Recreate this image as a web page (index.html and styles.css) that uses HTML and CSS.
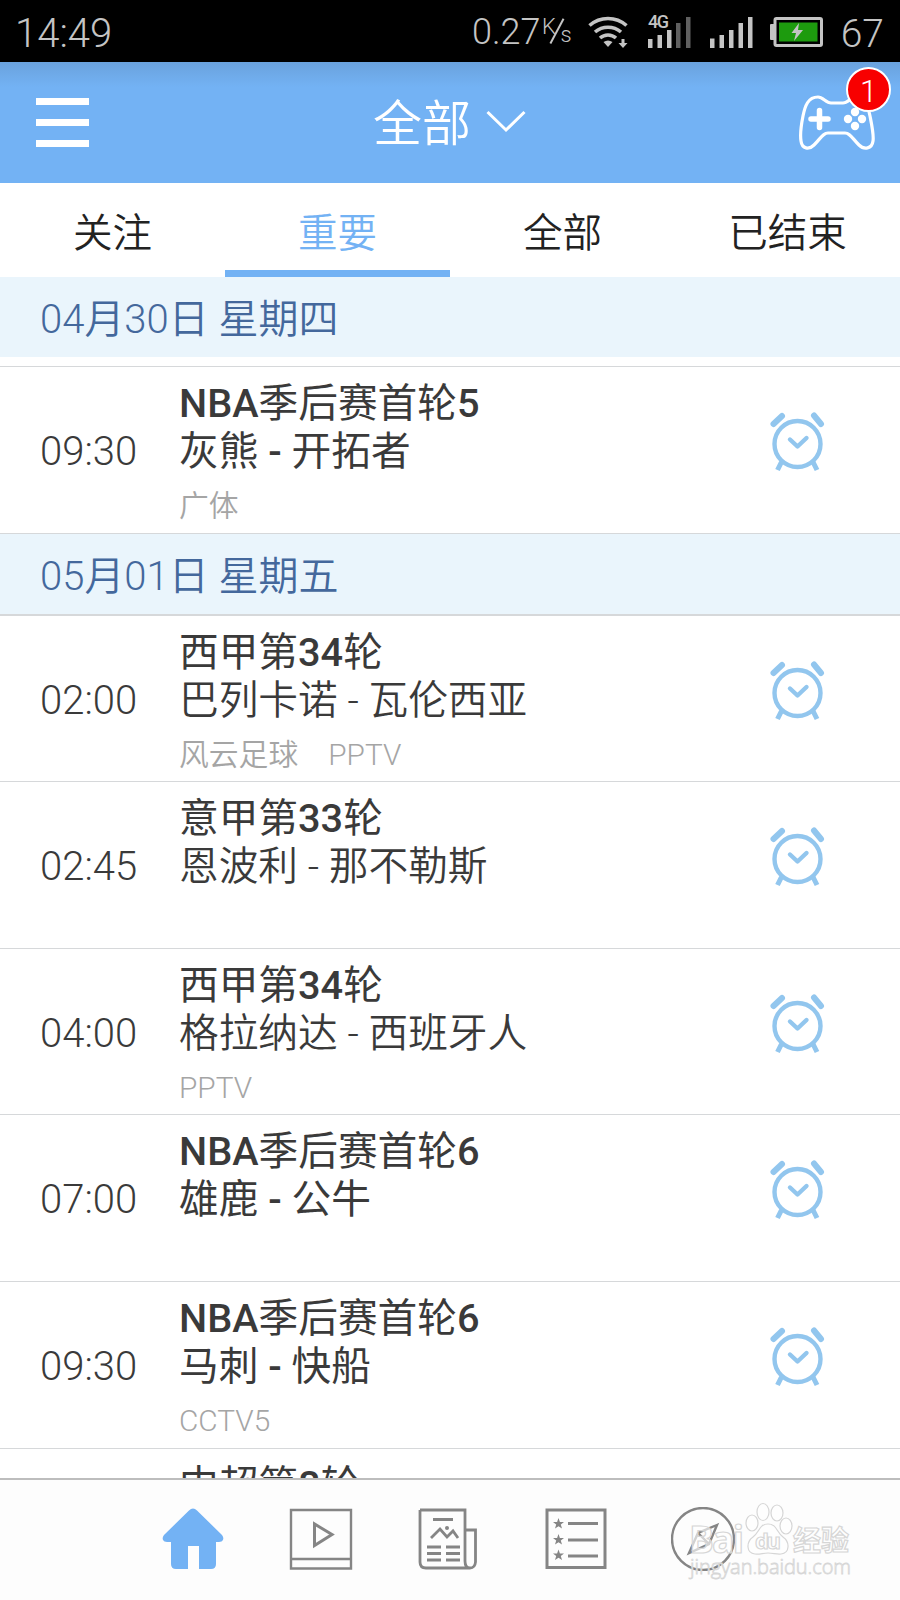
FILE: index.html
```html
<!DOCTYPE html>
<html lang="zh-CN">
<head>
    <meta charset="UTF-8" />
    <meta name="viewport" content="width=device-width, initial-scale=1" />
    <title>全部赛事</title>
    <link rel="stylesheet" href="styles.css">
</head>
<body>
    <svg class="sprite" width="0" height="0">
        <symbol id="alarm" viewBox="0 0 60 64">
            <g fill="none" stroke="#92c6ee" stroke-width="4.4" stroke-linecap="round" stroke-linejoin="round">
                <circle cx="29.500" cy="34" r="23" />
                <path d="M22 29.500l7.500 7 9-8.500" />
                <path d="M13.500 52l-4 8M45 52l4 8" stroke-linecap="butt" stroke-width="5" />
                <path d="M5.500 14l8.500-8M46 5.500l7 8.500" stroke-width="6" />
            </g>
        </symbol>
    </svg>

    <div class="status">
        <span class="clock">14:49</span>
        <span class="speed">0.27</span>
        <span class="unit"><span>K</span><i></i><b>s</b></span>
        <svg class="wifi" width="40" height="32" viewBox="0 0 40 32">
            <g fill="none" stroke="#c4c4c4" stroke-width="3.600">
                <path d="M1.500 9.500a28 28 0 0 1 37 0" />
                <path d="M7 16a20 20 0 0 1 26 0" />
                <path d="M12 22a12 12 0 0 1 16 0" />
            </g>
            <path d="M15.500 26q4.500-3 9 0l-4.500 5z" fill="#c4c4c4" />
            <path d="M33.500 23h3v4h3l-4.500 5-4.500-5h3z" fill="#c4c4c4" />
        </svg>
        <div class="cell">
            <span class="net">4G</span>
            <svg width="43" height="32" viewBox="0 0 43 32" fill="#c4c4c4">
                <path d="M0 23h4.500v9H0zM9.500 19H14v13H9.500zM19 14h4.500v18H19z" />
                <path d="M28 7h4.500v25H28zM38 1h4.500v31H38z" fill="#606060" />
            </svg>
        </div>
        <svg class="bars" width="43" height="32" viewBox="0 0 43 32" fill="#c4c4c4">
            <path d="M0 22.500h4.500V32H0zM9.500 19H14v13H9.500zM19 14h4.500v18H19zM28.500 7H33v25h-4.500zM38 1h4.500v31H38z" />
        </svg>
        <svg class="battery" width="53" height="30" viewBox="0 0 53 30">
            <rect x="0" y="7" width="5" height="16" rx="1" fill="#c4c4c4" />
            <rect x="5" y="1.500" width="46.500" height="27" rx="1.500" fill="none" stroke="#c4c4c4" stroke-width="3" />
            <rect x="9" y="5.500" width="38.500" height="19" fill="#1d9b0e" />
            <path d="M29 6l-7.500 10h4.500l-2 8 9-11h-5z" fill="#c4c4c4" />
        </svg>
        <span class="percent">67</span>
    </div>

    <div class="header">
        <div class="menu"><i></i><i></i><i></i></div>
        <div class="title"><span>全部</span>
            <svg width="40" height="24" viewBox="0 0 40 24"><path d="M1.500 2L20 20 38.500 2" fill="none" stroke="#fff" stroke-width="3" /></svg>
        </div>
        <div class="game">
            <svg width="76" height="56" viewBox="0 0 76 56">
                <path d="M19 2c5 0 8 6 13 6h12c5 0 8-6 13-6 9 0 12 9 14 19 2 10 4 19 3 25-1 8-9 9-14 4-7-7-9-12-14-12H29c-5 0-7 5-14 12-5 5-12 4-13-4C1 40 2 31 4 21 6 11 9 2 19 2z" fill="none" stroke="#fff" stroke-width="3.200" />
                <path d="M20.500 15.500v17M12 24h17" stroke="#fff" stroke-width="5.500" stroke-linecap="round" />
                <g fill="#fff"><circle cx="56" cy="17" r="4.200" /><circle cx="49" cy="24" r="4.200" /><circle cx="63" cy="24" r="4.200" /><circle cx="56" cy="31" r="4.200" /></g>
            </svg>
            <span class="badge">1</span>
        </div>
    </div>

    <div class="tabs">
        <div class="tab">关注</div>
        <div class="tab active">重要</div>
        <div class="tab">全部</div>
        <div class="tab">已结束</div>
    </div>

    <div class="list">
        <div class="date first">04月30日 星期四</div>
        <div class="match">
            <div class="time">09:30</div>
            <div class="info">
                <div class="league"><b>NBA</b>季后赛首轮<b>5</b></div>
                <div class="teams strong">灰熊 <b>-</b> 开拓者</div>
                <div class="channel">广体</div>
            </div>
            <svg class="alarm"><use href="#alarm" /></svg>
        </div>
        <div class="date">05月01日 星期五</div>
        <div class="match">
            <div class="time">02:00</div>
            <div class="info">
                <div class="league">西甲第<b>34</b>轮</div>
                <div class="teams">巴列卡诺 - 瓦伦西亚</div>
                <div class="channel"><span>风云足球</span><span>PPTV</span></div>
            </div>
            <svg class="alarm"><use href="#alarm" /></svg>
        </div>
        <div class="match">
            <div class="time">02:45</div>
            <div class="info">
                <div class="league">意甲第<b>33</b>轮</div>
                <div class="teams">恩波利 - 那不勒斯</div>
            </div>
            <svg class="alarm"><use href="#alarm" /></svg>
        </div>
        <div class="match">
            <div class="time">04:00</div>
            <div class="info">
                <div class="league">西甲第<b>34</b>轮</div>
                <div class="teams">格拉纳达 - 西班牙人</div>
                <div class="channel">PPTV</div>
            </div>
            <svg class="alarm"><use href="#alarm" /></svg>
        </div>
        <div class="match">
            <div class="time">07:00</div>
            <div class="info">
                <div class="league"><b>NBA</b>季后赛首轮<b>6</b></div>
                <div class="teams strong">雄鹿 <b>-</b> 公牛</div>
            </div>
            <svg class="alarm"><use href="#alarm" /></svg>
        </div>
        <div class="match">
            <div class="time">09:30</div>
            <div class="info">
                <div class="league"><b>NBA</b>季后赛首轮<b>6</b></div>
                <div class="teams strong">马刺 <b>-</b> 快船</div>
                <div class="channel">CCTV5</div>
            </div>
            <svg class="alarm"><use href="#alarm" /></svg>
        </div>
        <div class="match">
            <div class="time"></div>
            <div class="info">
                <div class="league">中超第<b>8</b>轮</div>
            </div>
        </div>
    </div>

    <div class="nav">
        <svg width="64" height="64" viewBox="0 0 64 64">
            <path d="M28 3.500q4-4 8 0L61 28q2 2.500 1 5-1 2-4 2h-3v22q0 5-5 5H38V39H27v23H15q-5 0-5-5V35H6q-3 0-4-2-1-2.500 1-5z" fill="#73b2f4" />
        </svg>
        <svg width="64" height="64" viewBox="0 0 64 64" fill="none" stroke="#858585">
            <path d="M2 3h60v58.500H2zM2 52h60" stroke-width="2.400" />
            <path d="M25.500 17v21.500L43 27.500z" stroke-width="3" />
        </svg>
        <svg width="64" height="64" viewBox="0 0 64 64" fill="none" stroke="#858585" stroke-width="2.800">
            <path d="M4 3h45v51q0 7 5 7t5.500-6V23H49M4 3v52q0 6 6 6h44" />
            <path d="M17 12.500h20M15 31l9-9 7 8 6-6 5 7M11 40h14M11 46.500h14M11 53h14M30 40h14M30 46.500h14M30 53h14" />
            <circle cx="31" cy="21" r="2" fill="#858585" stroke="none" />
        </svg>
        <svg width="64" height="64" viewBox="0 0 64 64">
            <path d="M3 3h58v57.500H3zM24 16.500h30M24 33h30M24 49h30" fill="none" stroke="#858585" stroke-width="3" />
            <g fill="#858585">
                <path id="star" d="M14.500 11l1.400 3.900 4.100.1-3.200 2.500 1.200 4-3.500-2.300-3.500 2.300 1.200-4L9 15l4.100-.1z" />
                <use href="#star" y="16" /><use href="#star" y="31.500" />
            </g>
        </svg>
        <svg width="64" height="64" viewBox="0 0 64 64" fill="none" stroke="#858585">
            <circle cx="32" cy="32" r="31" stroke-width="2.400" />
            <path d="M46 18L27 26 18 46 38 37zM27 26l11 11" stroke-width="2.400" />
        </svg>
        <svg class="watermark" width="180" height="86" viewBox="0 0 180 86">
            <g fill="#fff" fill-opacity=".65" stroke="#d6d6d6" stroke-width="1.200">
                <text x="9" y="54" font-size="37" font-weight="700" textLength="55">Bai</text>
                <path d="M88 25c-9 0-8 8-15 13-7 5-7 16 2 17 5 .5 8-1 13-1s9 1.500 13 1c9-1 9-12 2-17-7-5-6-13-15-13z" />
                <ellipse cx="72" cy="24" rx="6" ry="8" /><ellipse cx="83" cy="13" rx="6" ry="8.500" />
                <ellipse cx="97" cy="14" rx="6" ry="8" /><ellipse cx="106" cy="27" rx="6" ry="8" />
                <text x="75" y="50" font-size="22" font-weight="700" textLength="26">du</text>
                <text x="113" y="52" font-size="28" font-weight="700" textLength="56">经验</text>
                <text x="10" y="75" font-size="20" stroke-width=".8" textLength="161">jingyan.baidu.com</text>
            </g>
        </svg>
    </div>
</body>
</html>
```

FILE: styles.css
```css
:root {
    --blue: #73b2f4;
    --band: #eaf5fc;
    --line: #d6d8da;
    --grey: #c4c4c4;
}

* {
    box-sizing: border-box;
}

body {
    margin: 0;
    width: 900px;
    height: 1600px;
    display: flex;
    flex-direction: column;
    overflow: hidden;
    background: #fff;
    color: #3a3a3a;
    font-family: Roboto, "Noto Sans CJK SC", sans-serif;
    font-weight: 350;
}

svg {
    flex: none;
    display: block;
}

.sprite {
    position: absolute;
}

/* phone status bar */
.status {
    height: 62px;
    flex: none;
    display: flex;
    align-items: center;
    padding: 2px 16px 0 15px;
    background: #000;
    color: var(--grey);
    font-size: 40px;
    font-weight: 300;
    line-height: 60px;
}

.clock {
    width: 457px;
    padding-top: 3px;
}

.speed {
    width: 70px;
    font-size: 36px;
}

.unit {
    width: 30px;
    height: 32px;
    display: flex;
    font-size: 22px;
    line-height: 22px;
}

.unit i {
    width: 1.5px;
    height: 28px;
    margin: 1px 2px 0 0;
    background: var(--grey);
    transform: rotate(28deg);
}

.unit b {
    margin: 8px 0 0 1px;
    font-weight: 300;
}

.wifi {
    margin-left: 16px;
}

.cell {
    position: relative;
    margin-left: 20px;
}

.net {
    position: absolute;
    left: 0;
    top: -3px;
    font-size: 18px;
    font-weight: 500;
    line-height: 18px;
    letter-spacing: -1.5px;
}

.bars {
    margin-left: 19px;
}

.battery {
    margin-left: 17px;
}

.percent {
    margin-left: auto;
    padding-top: 3px;
    font-size: 39px;
}

.header {
    height: 120.5px;
    flex: none;
    display: flex;
    align-items: center;
    justify-content: space-between;
    padding: 0 25px 0 36px;
    background: linear-gradient(#6aa2dd, var(--blue) 25px);
    color: #fff;
}

.menu {
    width: 64px;
    display: grid;
    gap: 14.5px;
}

.menu i {
    width: 53px;
    height: 6.5px;
    background: #fff;
}

.title {
    display: flex;
    align-items: center;
    gap: 15px;
    font-size: 49px;
}

.title span {
    margin-top: -6px;
}

.game {
    position: relative;
    top: 1px;
}

.badge {
    position: absolute;
    left: 47px;
    top: -28px;
    width: 45px;
    height: 45px;
    border: 2px solid #fff;
    border-radius: 50%;
    background: #f80000;
    font-size: 31px;
    font-weight: 300;
    line-height: 45px;
    text-align: center;
}

.tabs {
    height: 94.5px;
    flex: none;
    display: grid;
    grid-template-columns: repeat(4, 1fr);
    grid-template-rows: 94.5px;
    color: #222;
    font-size: 39.500px;
    line-height: 101px;
    text-align: center;
}

.tab.active {
    color: var(--blue);
    box-shadow: inset 0 -7px var(--blue);
}

.list {
    flex: 1;
    min-height: 0;
    overflow: hidden;
}

.date {
    height: 82px;
    padding-left: 40px;
    background: var(--band);
    border-bottom: 2px solid var(--line);
    color: #44689c;
    font-size: 40px;
    line-height: 85px;
}

.date.first {
    height: 80px;
    margin-bottom: 10px;
    border: 0;
    box-shadow: 0 9px #fff, 0 10px var(--line);
}

.match {
    height: 166.600px;
    display: flex;
    border-bottom: 1.500px solid var(--line);
}

.time {
    width: 139px;
    padding: 61px 0 0 40px;
    font-size: 40px;
    font-weight: 300;
    line-height: 47px;
}

.info {
    width: 589px;
    padding: 13px 0 0 40px;
    font-size: 39.700px;
    line-height: 48px;
}

.league,
.teams.strong {
    font-weight: 400;
}

.info b {
    font-weight: 500;
}

.channel {
    display: flex;
    gap: 30px;
    margin-top: 10px;
    color: #a5a5a5;
    font-size: 29.800px;
    line-height: 40px;
}

.alarm {
    width: 60px;
    height: 64px;
    margin: 43px 0 0 40px;
}

.nav {
    position: relative;
    height: 122px;
    flex: none;
    display: flex;
    gap: 63.5px;
    padding: 27px 0 0 161px;
    border-top: 2px solid #bdbdbd;
    background: #fdfdfd;
}

.watermark {
    position: absolute;
    left: 680px;
    top: 19px;
    font-family: "Open Sans", "Noto Sans CJK SC", sans-serif;
}
```
